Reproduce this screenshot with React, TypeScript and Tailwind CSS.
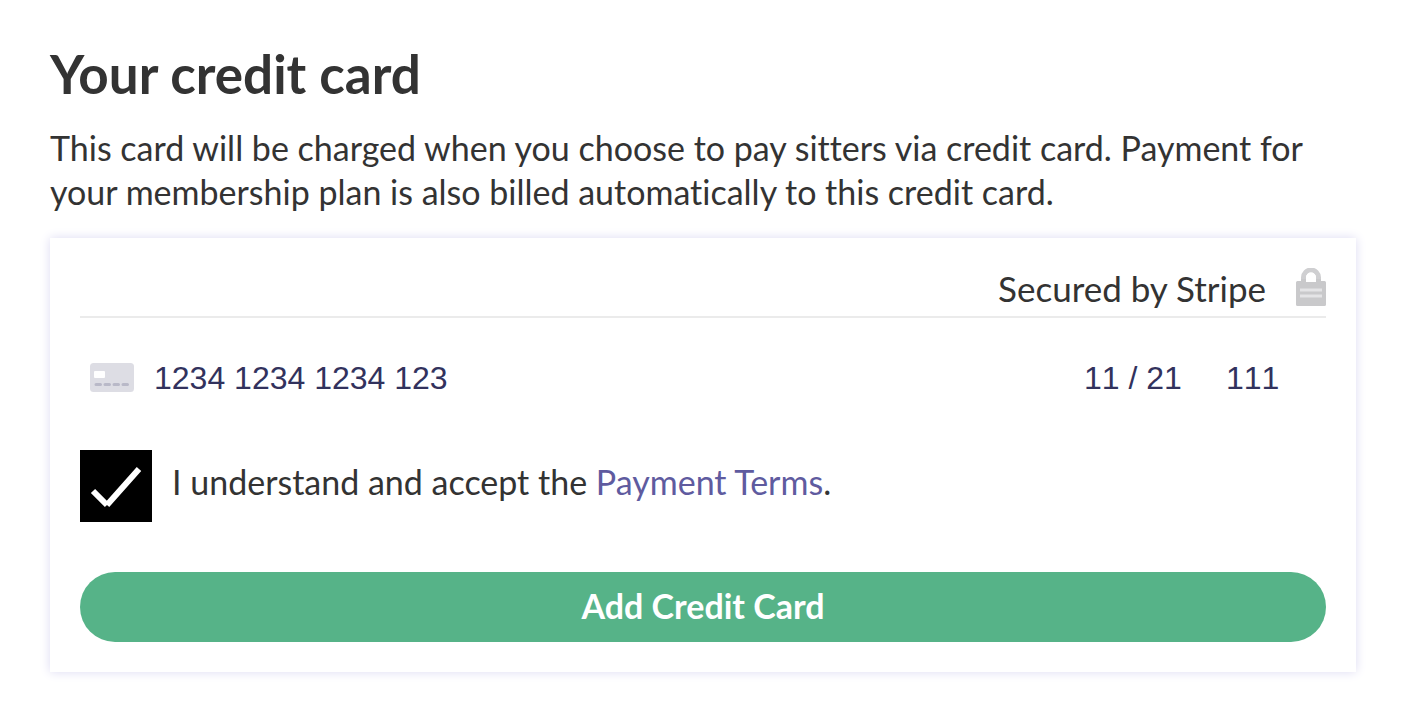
import { useState } from 'react'

function LockIcon() {
  return (
    <svg className="h-[38px] w-[30px]" viewBox="0 0 30 38" fill="none" aria-hidden="true">
      <path d="M7.5 15V9.5a7.5 7.5 0 0 1 15 0V15" stroke="#cfcfd1" strokeWidth="5" />
      <path d="M0 14.5q0-1.5 1.5-1.5H5v-2h20v2h3.5q1.5 0 1.5 1.5v22q0 1.5-1.5 1.5h-27Q0 38 0 36.5z" fill="#c9c9cb" />
      <path d="M10 14V9.5a5 5 0 0 1 10 0V14z" fill="#fff" />
      <path d="M4 22h22M4 28h22" stroke="#e4e4e6" strokeWidth="3" />
    </svg>
  )
}

function CardIcon() {
  return (
    <svg className="h-[30px] w-11 shrink-0" viewBox="0 0 44 30" aria-hidden="true">
      <rect width="44" height="29" rx="3.5" fill="#dddde4" />
      <rect x="4" y="8" width="11" height="7" rx="1" fill="#fff" />
      <path
        d="M6 21.5h4.500M15 21.5h4.500M24 21.5h4.500M33 21.5h4.500"
        stroke="#b9b9c8"
        strokeWidth="3"
        strokeLinecap="round"
      />
    </svg>
  )
}

export default function App() {
  const [number, setNumber] = useState('1234 1234 1234 123')
  const [expiry, setExpiry] = useState('11 / 21')
  const [cvc, setCvc] = useState('111')
  const [accepted, setAccepted] = useState(true)

  return (
    <main className="bg-white pt-11 pr-[49px] pb-11 pl-[50px] font-['Lato',sans-serif] text-[34px] text-[#333333] [font-variant-ligatures:none]">
      <h1 className="text-[53px] leading-[60px] font-bold">Your credit card</h1>
      <p className="mt-[22px] leading-[44px]">
        This card will be charged when you choose to pay sitters via credit card. Payment for your
        membership plan is also billed automatically to this credit card.
      </p>

      <form
        onSubmit={(e) => e.preventDefault()}
        className="mt-6 bg-white p-[30px] shadow-[0_0_10px_#dcdaf2]"
      >
        <div className="flex items-start justify-end gap-[30px] border-b-2 border-[#ebebeb] pb-2">
          <span className="text-[35px] leading-[40px]">Secured by Stripe</span>
          <LockIcon />
        </div>

        <div className="mt-10 flex items-center pl-2.5 font-['Liberation_Sans',Arial,sans-serif] text-[32px] leading-[40px] text-[#32325d] [font-kerning:none]">
          <CardIcon />
          <input
            aria-label="Card number"
            value={number}
            onChange={(e) => setNumber(e.target.value)}
            className="ml-5 min-w-0 flex-1 outline-none"
          />
          <input
            aria-label="Expiry date"
            value={expiry}
            onChange={(e) => setExpiry(e.target.value)}
            className="w-[142px] outline-none"
          />
          <input
            aria-label="CVC"
            value={cvc}
            onChange={(e) => setCvc(e.target.value)}
            className="w-[100px] outline-none"
          />
        </div>

        <div className="mt-[52px] flex items-center gap-5">
          <span className="grid size-[72px] shrink-0">
            <input
              id="terms"
              type="checkbox"
              checked={accepted}
              onChange={(e) => setAccepted(e.target.checked)}
              className="col-start-1 row-start-1 size-full appearance-none bg-black"
            />
            {accepted && (
              <svg
                className="pointer-events-none col-start-1 row-start-1 size-full"
                viewBox="0 0 72 72"
                fill="none"
                aria-hidden="true"
              >
                <path d="M13 41L27 55M27 55L59 19" stroke="#fff" strokeWidth="6" />
              </svg>
            )}
          </span>
          <label htmlFor="terms" className="pb-2 leading-[40px]">
            I understand and accept the{' '}
            <a href="#terms" className="text-[#5f5b9f]">
              Payment Terms
            </a>
            .
          </label>
        </div>

        <button
          type="submit"
          className="mt-[50px] h-[70px] w-full rounded-full bg-[#56b388] pb-1 font-bold text-white"
        >
          Add Credit Card
        </button>
      </form>
    </main>
  )
}
